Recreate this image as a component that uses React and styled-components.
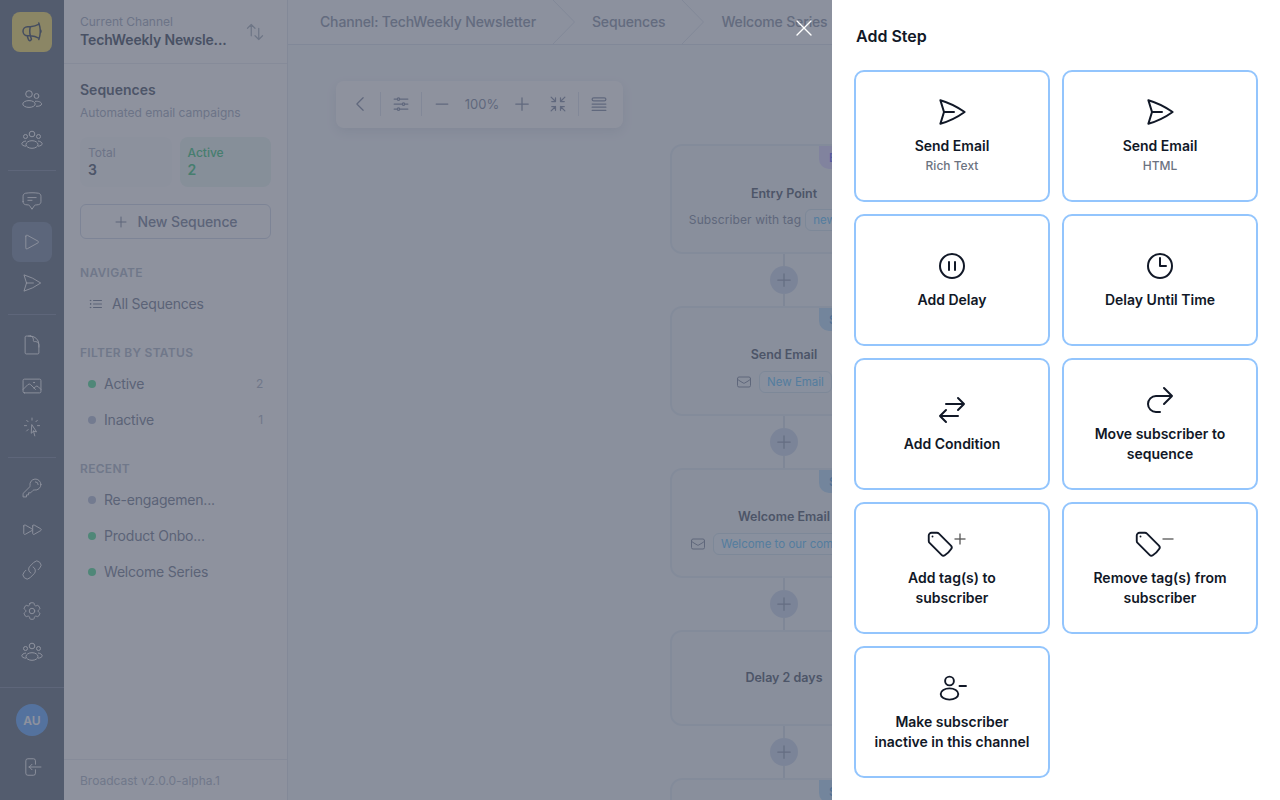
import React from 'react'
import styled, { createGlobalStyle } from 'styled-components'
import {
  HiOutlineMegaphone,
  HiOutlineChatBubbleBottomCenterText,
  HiOutlinePlay,
  HiOutlinePaperAirplane,
  HiOutlineDocument,
  HiOutlinePhoto,
  HiOutlineCursorArrowRays,
  HiOutlineKey,
  HiOutlineForward,
  HiOutlineLink,
  HiOutlineCog6Tooth,
  HiOutlineArrowLeftOnRectangle,
  HiOutlineArrowsUpDown,
  HiOutlinePlus,
  HiOutlineListBullet,
  HiOutlineChevronLeft,
  HiOutlineAdjustmentsHorizontal,
  HiOutlineMinus,
  HiOutlineArrowsPointingIn,
  HiOutlineQueueList,
  HiOutlineXMark,
  HiOutlineEnvelope,
  HiOutlinePauseCircle,
  HiOutlineClock,
  HiOutlineArrowsRightLeft,
  HiOutlineArrowUturnRight,
  HiOutlineTag,
} from 'react-icons/hi2'

const GlobalStyle = createGlobalStyle`
  html, body {
    margin: 0;
    padding: 0;
    height: 100%;
    background: #fff;
    font-family: Inter, "Liberation Sans", sans-serif;
  }
  * {
    box-sizing: border-box;
  }
`

const Page = styled.div`
  position: relative;
  display: flex;
  width: 1280px;
  height: 800px;
  overflow: hidden;
`

const Rail = styled.nav`
  display: flex;
  flex-direction: column;
  align-items: center;
  flex: none;
  width: 64px;
  padding-top: 12px;
  background: #89939f;
  color: #fff;
`

const Logo = styled.div`
  display: flex;
  align-items: center;
  justify-content: center;
  width: 40px;
  height: 40px;
  margin-bottom: 27px;
  border-radius: 8px;
  background: #f8e68c;
  color: #6b7482;
`

const RailItem = styled.div`
  display: flex;
  align-items: center;
  justify-content: center;
  flex: none;
  width: 40px;
  height: 40px;
  margin-bottom: 1px;
  border-radius: 8px;
  background: ${(props) => (props.$active ? '#9ba7b9' : 'transparent')};
  svg {
    stroke-width: 1;
  }
`

const RailDivider = styled.div`
  flex: none;
  width: 48px;
  height: 1px;
  margin: ${(props) => props.$top}px 0 10px;
  background: #9fa7b7;
`

const RailFooter = styled.div`
  display: flex;
  flex-direction: column;
  align-items: center;
  width: 100%;
  margin-top: auto;
  padding: 16px 0 12px;
  border-top: 1px solid #9fa7b7;
`

const Avatar = styled.div`
  display: flex;
  align-items: center;
  justify-content: center;
  width: 32px;
  height: 32px;
  margin-bottom: 11px;
  border-radius: 50%;
  background: #8bbfff;
  font-size: 12px;
  font-weight: 600;
`

const Sidebar = styled.aside`
  display: flex;
  flex-direction: column;
  flex: none;
  width: 224px;
  border-right: 1px solid #e9edf3;
  background: #fff;
`

const ChannelHeader = styled.div`
  display: flex;
  align-items: center;
  justify-content: space-between;
  height: 64px;
  padding: 0 22px 0 16px;
  border-bottom: 1px solid #eef1f5;
  color: #bfc7cf;
`

const ChannelLabel = styled.div`
  font-size: 12px;
  line-height: 16px;
  color: #bac2d0;
`

const ChannelName = styled.div`
  font-size: 14px;
  font-weight: 600;
  line-height: 20px;
  letter-spacing: -0.15px;
  white-space: nowrap;
  color: #747d8b;
`

const SidebarBody = styled.div`
  display: flex;
  flex-direction: column;
  flex: 1;
  padding: 16px 16px 0;
`

const SidebarTitle = styled.div`
  font-size: 14px;
  font-weight: 600;
  line-height: 20px;
  color: #7c8592;
`

const SidebarSub = styled.div`
  margin-top: 5px;
  font-size: 12px;
  line-height: 16px;
  color: #bac2d0;
`

const Stats = styled.div`
  display: grid;
  grid-template-columns: 1fr 1fr;
  gap: 8px;
  margin-top: 16px;
`

const Stat = styled.div`
  height: 50px;
  padding: 8px;
  border-radius: 8px;
  background: ${(props) => (props.$green ? '#eef8f5' : '#fbfcfd')};
  color: ${(props) => (props.$green ? '#6fd6a0' : '#7c8592')};
`

const StatLabel = styled.div`
  font-size: 12px;
  font-weight: ${(props) => (props.$green ? 500 : 400)};
  line-height: 15px;
  color: ${(props) => (props.$green ? '#6fd6a0' : '#bac2d0')};
`

const StatValue = styled.div`
  margin-top: 1px;
  font-size: 14px;
  font-weight: 600;
  line-height: 18px;
`

const NewButton = styled.div`
  display: flex;
  align-items: center;
  justify-content: center;
  gap: 8px;
  height: 35px;
  margin-top: 17px;
  border: 1px solid #dde3ee;
  border-radius: 6px;
  font-size: 14px;
  font-weight: 500;
  letter-spacing: -0.1px;
  color: #9ba3b4;
`

const SectionLabel = styled.div`
  margin-top: ${(props) => props.$top || 23}px;
  margin-bottom: 5px;
  font-size: 12px;
  font-weight: 600;
  line-height: 16px;
  letter-spacing: 0.3px;
  text-transform: uppercase;
  color: #c3cad6;
`

const NavItem = styled.div`
  display: flex;
  align-items: center;
  gap: 8px;
  height: 36px;
  padding: 0 8px;
  font-size: 14px;
  line-height: 20px;
  letter-spacing: -0.2px;
  color: #99a1b1;
`

const Dot = styled.span`
  flex: none;
  width: 8px;
  height: 8px;
  border-radius: 50%;
  background: ${(props) => (props.$green ? '#81e8b3' : '#c9d1e3')};
`

const Count = styled.span`
  margin-left: auto;
  font-size: 12px;
  color: #c3cad6;
`

const SidebarFooter = styled.div`
  display: flex;
  align-items: center;
  height: 41px;
  padding: 0 16px;
  border-top: 1px solid #eef1f5;
  font-size: 12px;
  color: #c3cad6;
`

const Main = styled.main`
  display: flex;
  flex-direction: column;
  flex: 1;
  min-width: 0;
  background: #f7fafd;
`

const Breadcrumbs = styled.div`
  display: flex;
  align-items: center;
  flex: none;
  height: 45px;
  padding-left: 32px;
  border-bottom: 1px solid #e5eaf2;
  background: #fafcfe;
`

const Crumb = styled.span`
  margin-top: -1px;
  font-size: 14px;
  font-weight: 500;
  letter-spacing: -0.15px;
  white-space: nowrap;
  color: #a9b1c0;
`

const CrumbArrow = styled.svg`
  flex: none;
  width: 22px;
  height: 44px;
  margin: 0 17px;
`

const Canvas = styled.div`
  position: relative;
  display: flex;
  flex-direction: column;
  align-items: center;
  flex: 1;
  overflow: hidden;
  padding-top: 99px;
`

const Toolbar = styled.div`
  position: absolute;
  top: 36px;
  left: 48px;
  display: flex;
  align-items: center;
  gap: 10px;
  height: 47px;
  padding: 0 14px 1px;
  border-radius: 8px;
  background: #fff;
  box-shadow: 0 4px 12px rgba(40, 50, 80, 0.08);
  color: #a3abbd;
`

const ToolDivider = styled.div`
  flex: none;
  width: 1px;
  height: 24px;
  background: #e7ebf2;
`

const ToolSpacer = styled.div`
  flex: none;
  width: 6px;
  margin-right: -10px;
`

const Zoom = styled.div`
  width: 40px;
  font-size: 13px;
  text-align: center;
`

const Node = styled.div`
  position: relative;
  display: flex;
  flex-direction: column;
  align-items: center;
  justify-content: center;
  flex: none;
  width: 228px;
  height: ${(props) => props.$height}px;
  padding-top: ${(props) => (props.$badge ? 16 : 0)}px;
  border: 2px solid #e9f1f7;
  border-radius: 12px;
  background: #f5f9fb;
`

const NodeBadge = styled.div`
  position: absolute;
  top: 0;
  right: 0;
  width: 77px;
  height: 23px;
  padding-left: 10px;
  border-radius: 0 10px 0 10px;
  background: ${(props) => (props.$purple ? '#e4e0ff' : '#c8e4fa')};
  font-size: 12px;
  font-weight: 500;
  line-height: 23px;
  color: ${(props) => (props.$purple ? '#8f8cff' : '#7fb8ea')};
`

const NodeTitle = styled.div`
  font-size: 12.5px;
  font-weight: 600;
  line-height: 20px;
  color: #7c8592;
`

const NodeRow = styled.div`
  display: flex;
  align-items: center;
  gap: ${(props) => props.$gap || 7}px;
  height: 22px;
  margin-top: ${(props) => props.$top || 6}px;
  font-size: 12px;
  letter-spacing: 0.1px;
  white-space: nowrap;
  color: #a0a8b8;
`

const Pill = styled.span`
  display: flex;
  align-items: center;
  height: 22px;
  padding: 0 7px;
  border: 1px solid #dceaf3;
  border-radius: 6px;
  background: #f4fbff;
  font-size: 11.5px;
  letter-spacing: 0;
  color: #8ad4ff;
`

const Connector = styled.div`
  display: flex;
  flex-direction: column;
  align-items: center;
  flex: none;
  height: 52px;
  &::before,
  &::after {
    content: '';
    flex: 1;
    width: 2px;
    background: #e0e8f0;
  }
`

const AddCircle = styled.div`
  display: flex;
  align-items: center;
  justify-content: center;
  flex: none;
  width: 28px;
  height: 28px;
  border-radius: 50%;
  background: #d9e3f2;
  color: #aab4c6;
`

const Overlay = styled.div`
  position: absolute;
  inset: 0;
  background: rgba(29, 37, 61, 0.5);
`

const Drawer = styled.section`
  position: absolute;
  top: 0;
  right: 0;
  bottom: 0;
  width: 448px;
  padding: 0 22px;
  background: #fff;
`

const CloseButton = styled.div`
  position: absolute;
  top: 14px;
  left: -42px;
  display: flex;
  color: #fff;
  svg {
    stroke-width: 1.2;
  }
`

const DrawerTitle = styled.h2`
  margin: 0;
  padding: 26px 0 0 2px;
  height: 70px;
  font-size: 16px;
  font-weight: 600;
  line-height: 20px;
  color: #111827;
`

const StepGrid = styled.div`
  display: grid;
  grid-template-columns: 196px 196px;
  grid-auto-rows: 132px;
  gap: 12px;
`

const StepCard = styled.div`
  display: flex;
  flex-direction: column;
  align-items: center;
  justify-content: center;
  gap: 8px;
  padding: 0 16px;
  border: 2px solid #93c5fd;
  border-radius: 10px;
  background: #fff;
  color: #111827;
  text-align: center;
`

const StepIcon = styled.div`
  display: flex;
  align-items: ${(props) => (props.$tag ? 'center' : 'flex-start')};
  height: 32px;
  padding-right: ${(props) => (props.$tag ? 13 : 0)}px;
`

const StepSign = styled.svg`
  flex: none;
  align-self: flex-start;
  width: 12px;
  height: 12px;
  margin: 5px 0 0 -1px;
`

const StepText = styled.div`
  font-size: 14px;
  font-weight: 600;
  line-height: 20px;
`

const StepSub = styled.div`
  font-size: 12px;
  font-weight: 500;
  line-height: 20px;
  color: #6b7280;
`

const PeopleIcon = () => (
  <svg width="22" height="22" viewBox="0 0 22 22" fill="none" stroke="currentColor">
    <circle cx="8" cy="6" r="3.3" />
    <circle cx="15.5" cy="8" r="2.4" />
    <ellipse cx="8" cy="16" rx="6.2" ry="3.4" />
    <path d="M14 13.4c3.5-.6 6.6.9 6.6 2.6 0 1.500-2.600 2.500-5.600 2.300" />
  </svg>
)

const GroupIcon = () => (
  <svg width="22" height="22" viewBox="0 0 22 22" fill="none" stroke="currentColor">
    <circle cx="11" cy="5" r="2.800" />
    <circle cx="4.500" cy="7.500" r="2" />
    <circle cx="17.500" cy="7.500" r="2" />
    <ellipse cx="11" cy="15.500" rx="6" ry="3.800" />
    <path d="M5 12c-2.500.3-4.200 1.600-4.200 2.800S2.500 17 5 17.200M17 12c2.500.3 4.200 1.600 4.200 2.800S19.500 17 17 17.200" />
  </svg>
)

const UserMinusIcon = () => (
  <svg width="32" height="32" viewBox="0 0 32 32" fill="none" stroke="currentColor" strokeWidth="1.9" strokeLinecap="round">
    <circle cx="13.500" cy="9" r="4.400" />
    <ellipse cx="13.500" cy="22" rx="8.800" ry="5.600" />
    <path d="M23.500 14h6.500" />
  </svg>
)

const TagStepIcon = ({ sign }) => (
  <StepIcon $tag>
    <HiOutlineTag size={30} />
    <StepSign viewBox="0 0 12 12" fill="none" stroke="#555" strokeWidth="1.300">
      {sign === 'plus' && <path d="M6 .5v11" />}
      <path d="M.5 6h11" />
    </StepSign>
  </StepIcon>
)

const railGroups = [
  { top: 0, items: [{ icon: <PeopleIcon /> }, { icon: <GroupIcon /> }] },
  {
    top: 9,
    items: [
      { icon: <HiOutlineChatBubbleBottomCenterText size={22} /> },
      { icon: <HiOutlinePlay size={22} />, active: true },
      { icon: <HiOutlinePaperAirplane size={22} /> },
    ],
  },
  {
    top: 10,
    items: [
      { icon: <HiOutlineDocument size={22} /> },
      { icon: <HiOutlinePhoto size={22} /> },
      { icon: <HiOutlineCursorArrowRays size={22} /> },
    ],
  },
  {
    top: 9,
    items: [
      { icon: <HiOutlineKey size={22} /> },
      { icon: <HiOutlineForward size={22} /> },
      { icon: <HiOutlineLink size={22} /> },
      { icon: <HiOutlineCog6Tooth size={22} /> },
      { icon: <GroupIcon /> },
    ],
  },
]

const steps = [
  { icon: <HiOutlinePaperAirplane size={32} />, text: 'Send Email', sub: 'Rich Text' },
  { icon: <HiOutlinePaperAirplane size={32} />, text: 'Send Email', sub: 'HTML' },
  { icon: <HiOutlinePauseCircle size={32} />, text: 'Add Delay' },
  { icon: <HiOutlineClock size={32} />, text: 'Delay Until Time' },
  { icon: <HiOutlineArrowsRightLeft size={32} />, text: 'Add Condition' },
  { icon: <HiOutlineArrowUturnRight size={32} />, text: 'Move subscriber to sequence' },
  { tag: 'plus', text: 'Add tag(s) to subscriber' },
  { tag: 'minus', text: 'Remove tag(s) from subscriber' },
  { icon: <UserMinusIcon />, text: 'Make subscriber inactive in this channel' },
]

const Arrow = () => (
  <CrumbArrow viewBox="0 0 22 44" fill="none" stroke="#e6ebf2">
    <path d="M0 0l21.500 22L0 44" />
  </CrumbArrow>
)

const Add = () => (
  <Connector>
    <AddCircle>
      <HiOutlinePlus size={20} />
    </AddCircle>
  </Connector>
)

const Envelope = () => <HiOutlineEnvelope size={16} />

const App = () => {
  return (
    <Page>
      <GlobalStyle />
      <Rail>
        <Logo>
          <HiOutlineMegaphone size={24} />
        </Logo>
        {railGroups.map((group, i) => (
          <React.Fragment key={i}>
            {i > 0 && <RailDivider $top={group.top} />}
            {group.items.map((item, j) => (
              <RailItem key={j} $active={item.active}>
                {item.icon}
              </RailItem>
            ))}
          </React.Fragment>
        ))}
        <RailFooter>
          <Avatar>AU</Avatar>
          <RailItem>
            <HiOutlineArrowLeftOnRectangle size={22} />
          </RailItem>
        </RailFooter>
      </Rail>

      <Sidebar>
        <ChannelHeader>
          <div>
            <ChannelLabel>Current Channel</ChannelLabel>
            <ChannelName>TechWeekly Newsle...</ChannelName>
          </div>
          <HiOutlineArrowsUpDown size={20} />
        </ChannelHeader>
        <SidebarBody>
          <SidebarTitle>Sequences</SidebarTitle>
          <SidebarSub>Automated email campaigns</SidebarSub>
          <Stats>
            <Stat>
              <StatLabel>Total</StatLabel>
              <StatValue>3</StatValue>
            </Stat>
            <Stat $green>
              <StatLabel $green>Active</StatLabel>
              <StatValue>2</StatValue>
            </Stat>
          </Stats>
          <NewButton>
            <HiOutlinePlus size={16} />
            New Sequence
          </NewButton>
          <SectionLabel $top={26}>Navigate</SectionLabel>
          <NavItem>
            <HiOutlineListBullet size={16} />
            All Sequences
          </NavItem>
          <SectionLabel>Filter by status</SectionLabel>
          <NavItem>
            <Dot $green />
            Active
            <Count>2</Count>
          </NavItem>
          <NavItem>
            <Dot />
            Inactive
            <Count>1</Count>
          </NavItem>
          <SectionLabel>Recent</SectionLabel>
          <NavItem>
            <Dot />
            Re-engagemen...
          </NavItem>
          <NavItem>
            <Dot $green />
            Product Onbo...
          </NavItem>
          <NavItem>
            <Dot $green />
            Welcome Series
          </NavItem>
        </SidebarBody>
        <SidebarFooter>Broadcast v2.0.0-alpha.1</SidebarFooter>
      </Sidebar>

      <Main>
        <Breadcrumbs>
          <Crumb>Channel: TechWeekly Newsletter</Crumb>
          <Arrow />
          <Crumb>Sequences</Crumb>
          <Arrow />
          <Crumb>Welcome Series</Crumb>
        </Breadcrumbs>
        <Canvas>
          <Toolbar>
            <HiOutlineChevronLeft size={20} />
            <ToolDivider />
            <HiOutlineAdjustmentsHorizontal size={20} />
            <ToolDivider />
            <HiOutlineMinus size={20} />
            <Zoom>100%</Zoom>
            <HiOutlinePlus size={20} />
            <ToolSpacer />
            <HiOutlineArrowsPointingIn size={20} />
            <ToolDivider />
            <HiOutlineQueueList size={20} />
          </Toolbar>

          <Node $height={110} $badge>
            <NodeBadge $purple>Entry</NodeBadge>
            <NodeTitle>Entry Point</NodeTitle>
            <NodeRow $gap={4} $top={5}>
              Subscriber with tag
              <Pill>new-users</Pill>
            </NodeRow>
          </Node>
          <Add />
          <Node $height={110} $badge>
            <NodeBadge>Step 1</NodeBadge>
            <NodeTitle>Send Email</NodeTitle>
            <NodeRow>
              <Envelope />
              <Pill>New Email</Pill>
            </NodeRow>
          </Node>
          <Add />
          <Node $height={110} $badge>
            <NodeBadge>Step 2</NodeBadge>
            <NodeTitle>Welcome Email</NodeTitle>
            <NodeRow>
              <Envelope />
              <Pill>Welcome to our community</Pill>
            </NodeRow>
          </Node>
          <Add />
          <Node $height={96}>
            <NodeTitle>Delay 2 days</NodeTitle>
          </Node>
          <Add />
          <Node $height={110} $badge>
            <NodeBadge>Step 3</NodeBadge>
          </Node>
        </Canvas>
      </Main>

      <Overlay />

      <Drawer>
        <CloseButton>
          <HiOutlineXMark size={28} />
        </CloseButton>
        <DrawerTitle>Add Step</DrawerTitle>
        <StepGrid>
          {steps.map((step, i) => (
            <StepCard key={i}>
              {step.tag ? <TagStepIcon sign={step.tag} /> : <StepIcon>{step.icon}</StepIcon>}
              <div>
                <StepText>{step.text}</StepText>
                {step.sub && <StepSub>{step.sub}</StepSub>}
              </div>
            </StepCard>
          ))}
        </StepGrid>
      </Drawer>
    </Page>
  )
}

export default App
